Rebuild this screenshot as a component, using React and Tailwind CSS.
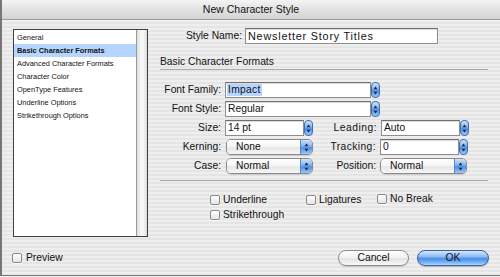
import React from "react";

const stripes =
  "bg-[repeating-linear-gradient(180deg,#eeeeee_0px,#eeeeee_2px,#e5e5e5_2px,#e5e5e5_4px)]";

const listItems = [
  "General",
  "Basic Character Formats",
  "Advanced Character Formats",
  "Character Color",
  "OpenType Features",
  "Underline Options",
  "Strikethrough Options",
];

function Arrows() {
  return (
    <svg width="5" height="9" viewBox="0 0 5 9" className="block">
      <path d="M2.5 0.5 L4.5 3.3 L0.5 3.3 Z" fill="#1b2a44" />
      <path d="M2.5 8.5 L4.5 5.7 L0.5 5.7 Z" fill="#1b2a44" />
    </svg>
  );
}

function Stepper() {
  return (
    <div className="w-[9px] h-[16px] rounded-[4px] border border-[#3d6db3] bg-[linear-gradient(180deg,#cfe3fb_0%,#7fb0ee_45%,#4d8fe6_55%,#9cc6f7_100%)] flex items-center justify-center shrink-0">
      <Arrows />
    </div>
  );
}

function Combo({ value, width, selected }) {
  return (
    <div className={`flex items-center h-[16px] ${width}`}>
      <div className="flex-1 h-[16px] bg-white border border-[#8e8e8e] border-t-[#6f6f6f] shadow-[inset_0_1px_1px_rgba(0,0,0,0.15)] flex items-center pl-[1px]">
        <span className={selected ? "bg-[#b5d5ff] px-[1px] leading-[12px] tracking-[0.3px]" : "px-[1px] leading-[12px]"}>{value}</span>
      </div>
      <Stepper />
    </div>
  );
}

function Popup({ value, width }) {
  return (
    <div className={`flex items-stretch h-[16px] ${width} rounded-[5px] border border-[#8a8a8a] overflow-hidden shadow-[0_1px_1px_rgba(0,0,0,0.12)]`}>
      <div className="flex-1 bg-[linear-gradient(180deg,#ffffff_0%,#f4f4f4_50%,#e6e6e6_55%,#f6f6f6_100%)] flex items-center pl-[9px]">
        {value}
      </div>
      <div className="w-[12px] bg-[linear-gradient(180deg,#cfe3fb_0%,#7fb0ee_45%,#4d8fe6_55%,#9cc6f7_100%)] border-l border-[#5a86c2] flex items-center justify-center">
        <Arrows />
      </div>
    </div>
  );
}

function Checkbox() {
  return (
    <div className="w-[10px] h-[10px] rounded-[2px] border border-[#8a8a8a] bg-[linear-gradient(180deg,#ffffff_0%,#e4e4e4_100%)] shadow-[0_1px_0_rgba(255,255,255,0.8)] shrink-0" />
  );
}

function Label({ children, width }) {
  return <div className={`${width} text-right shrink-0`}>{children}</div>;
}

export default function App() {
  return (
    <div className={`w-[500px] h-[277px] overflow-hidden ${stripes} font-['Liberation_Sans',Arial,sans-serif] text-[10.3px] text-[#111]`}>
      <div className="h-[276px] border-l-2 border-b border-[#777777] flex flex-col">
        {/* title bar */}
        <div className="h-[20px] shrink-0 bg-[linear-gradient(180deg,#f4f4f4_0%,#e2e2e2_50%,#d4d4d4_100%)] border-b border-[#9a9a9a] flex items-center justify-center text-[10.5px]">
          New Character Style
        </div>

        <div className="flex pt-[9px]">
          {/* left list */}
          <div className="ml-[11px] w-[135px] h-[208px] border border-[#3f3f3f] flex bg-white">
            <div className="flex-1 pt-[1px] text-[7.4px]">
              {listItems.map((item, i) => (
                <div
                  key={item}
                  className={
                    i === 1
                      ? "h-[13px] leading-[13px] pl-[3px] bg-[#b5d5ff] font-bold"
                      : "h-[13px] leading-[13px] pl-[3px]"
                  }
                >
                  {item}
                </div>
              ))}
            </div>
            <div className="w-[11px] border-l border-[#9a9a9a] bg-[linear-gradient(90deg,#dcdcdc_0%,#f7f7f7_40%,#f4f4f4_70%,#d8d8d8_100%)]" />
          </div>

          {/* right panel */}
          <div className="ml-[12px] w-[328px]">
            <div className="-mt-[1px] flex items-center h-[16px]">
              <Label width="w-[82px]">Style Name:</Label>
              <div className="ml-[3px] w-[193px] h-[16px] bg-white border border-[#8e8e8e] border-t-[#6f6f6f] shadow-[inset_0_1px_1px_rgba(0,0,0,0.15)] flex items-center pl-[2px] text-[10.8px] tracking-[0.8px]">
                Newsletter Story Titles
              </div>
            </div>

            <div className="mt-[12px] h-[14px] leading-[12px] border-b border-[#a9a9a9]">
              Basic Character Formats
            </div>

            <div className="mt-[12px] flex flex-col gap-[3px]">
              <div className="flex items-center">
                <Label width="w-[61px]">Font Family:</Label>
                <div className="ml-[4px]">
                  <Combo value="Impact" width="w-[155px]" selected />
                </div>
              </div>
              <div className="flex items-center">
                <Label width="w-[61px]">Font Style:</Label>
                <div className="ml-[4px]">
                  <Combo value="Regular" width="w-[155px]" />
                </div>
              </div>
              <div className="flex items-center">
                <Label width="w-[61px]">Size:</Label>
                <div className="ml-[4px]">
                  <Combo value="14 pt" width="w-[88px]" />
                </div>
                <div className="w-[64px] text-right shrink-0 tracking-[0.5px]">Leading:</div>
                <div className="ml-[4px]">
                  <Combo value="Auto" width="w-[88px]" />
                </div>
              </div>
              <div className="flex items-center">
                <Label width="w-[61px]">Kerning:</Label>
                <div className="ml-[5px]">
                  <Popup value="None" width="w-[87px]" />
                </div>
                <div className="w-[63px] text-right shrink-0 tracking-[0.4px]">Tracking:</div>
                <div className="ml-[4px]">
                  <Combo value="0" width="w-[88px]" />
                </div>
              </div>
              <div className="flex items-center">
                <Label width="w-[61px]">Case:</Label>
                <div className="ml-[5px]">
                  <Popup value="Normal" width="w-[87px]" />
                </div>
                <Label width="w-[63px]">Position:</Label>
                <div className="ml-[4px]">
                  <Popup value="Normal" width="w-[87px]" />
                </div>
              </div>
            </div>

            <div className="mt-[6px] border-b border-[#a9a9a9]" />

            <div className="mt-[13px] pl-[50px] flex">
              <div className="w-[96px] flex flex-col gap-[4px]">
                <div className="flex items-center gap-[3px] h-[11px]">
                  <Checkbox />
                  <span>Underline</span>
                </div>
                <div className="flex items-center gap-[3px] h-[11px]">
                  <Checkbox />
                  <span>Strikethrough</span>
                </div>
              </div>
              <div className="w-[71px] flex items-center gap-[3px] h-[11px]">
                <Checkbox />
                <span>Ligatures</span>
              </div>
              <div className="flex items-center gap-[3px] h-[11px] -mt-[1px]">
                <Checkbox />
                <span>No Break</span>
              </div>
            </div>
          </div>
        </div>

        {/* bottom bar */}
        <div className="mt-[13px] h-[16px] flex items-center">
          <div className="ml-[10px] flex items-center gap-[4px]">
            <Checkbox />
            <span>Preview</span>
          </div>
          <div className="ml-auto mr-[11px] flex items-center gap-[8px]">
            <button className="w-[71px] h-[16px] rounded-full border border-[#8d8d8d] bg-[linear-gradient(180deg,#ffffff_0%,#f2f2f2_50%,#e2e2e2_55%,#f8f8f8_100%)] shadow-[0_1px_1px_rgba(0,0,0,0.15)] leading-[14px]">
              Cancel
            </button>
            <button className="w-[72px] h-[16px] rounded-full border border-[#33609f] bg-[linear-gradient(180deg,#d4e6fb_0%,#8dbcf2_40%,#4b8ee6_55%,#7fb8f6_85%,#b7dafc_100%)] shadow-[0_1px_1px_rgba(0,0,0,0.2)] leading-[14px]">
              OK
            </button>
          </div>
        </div>
      </div>
    </div>
  );
}
